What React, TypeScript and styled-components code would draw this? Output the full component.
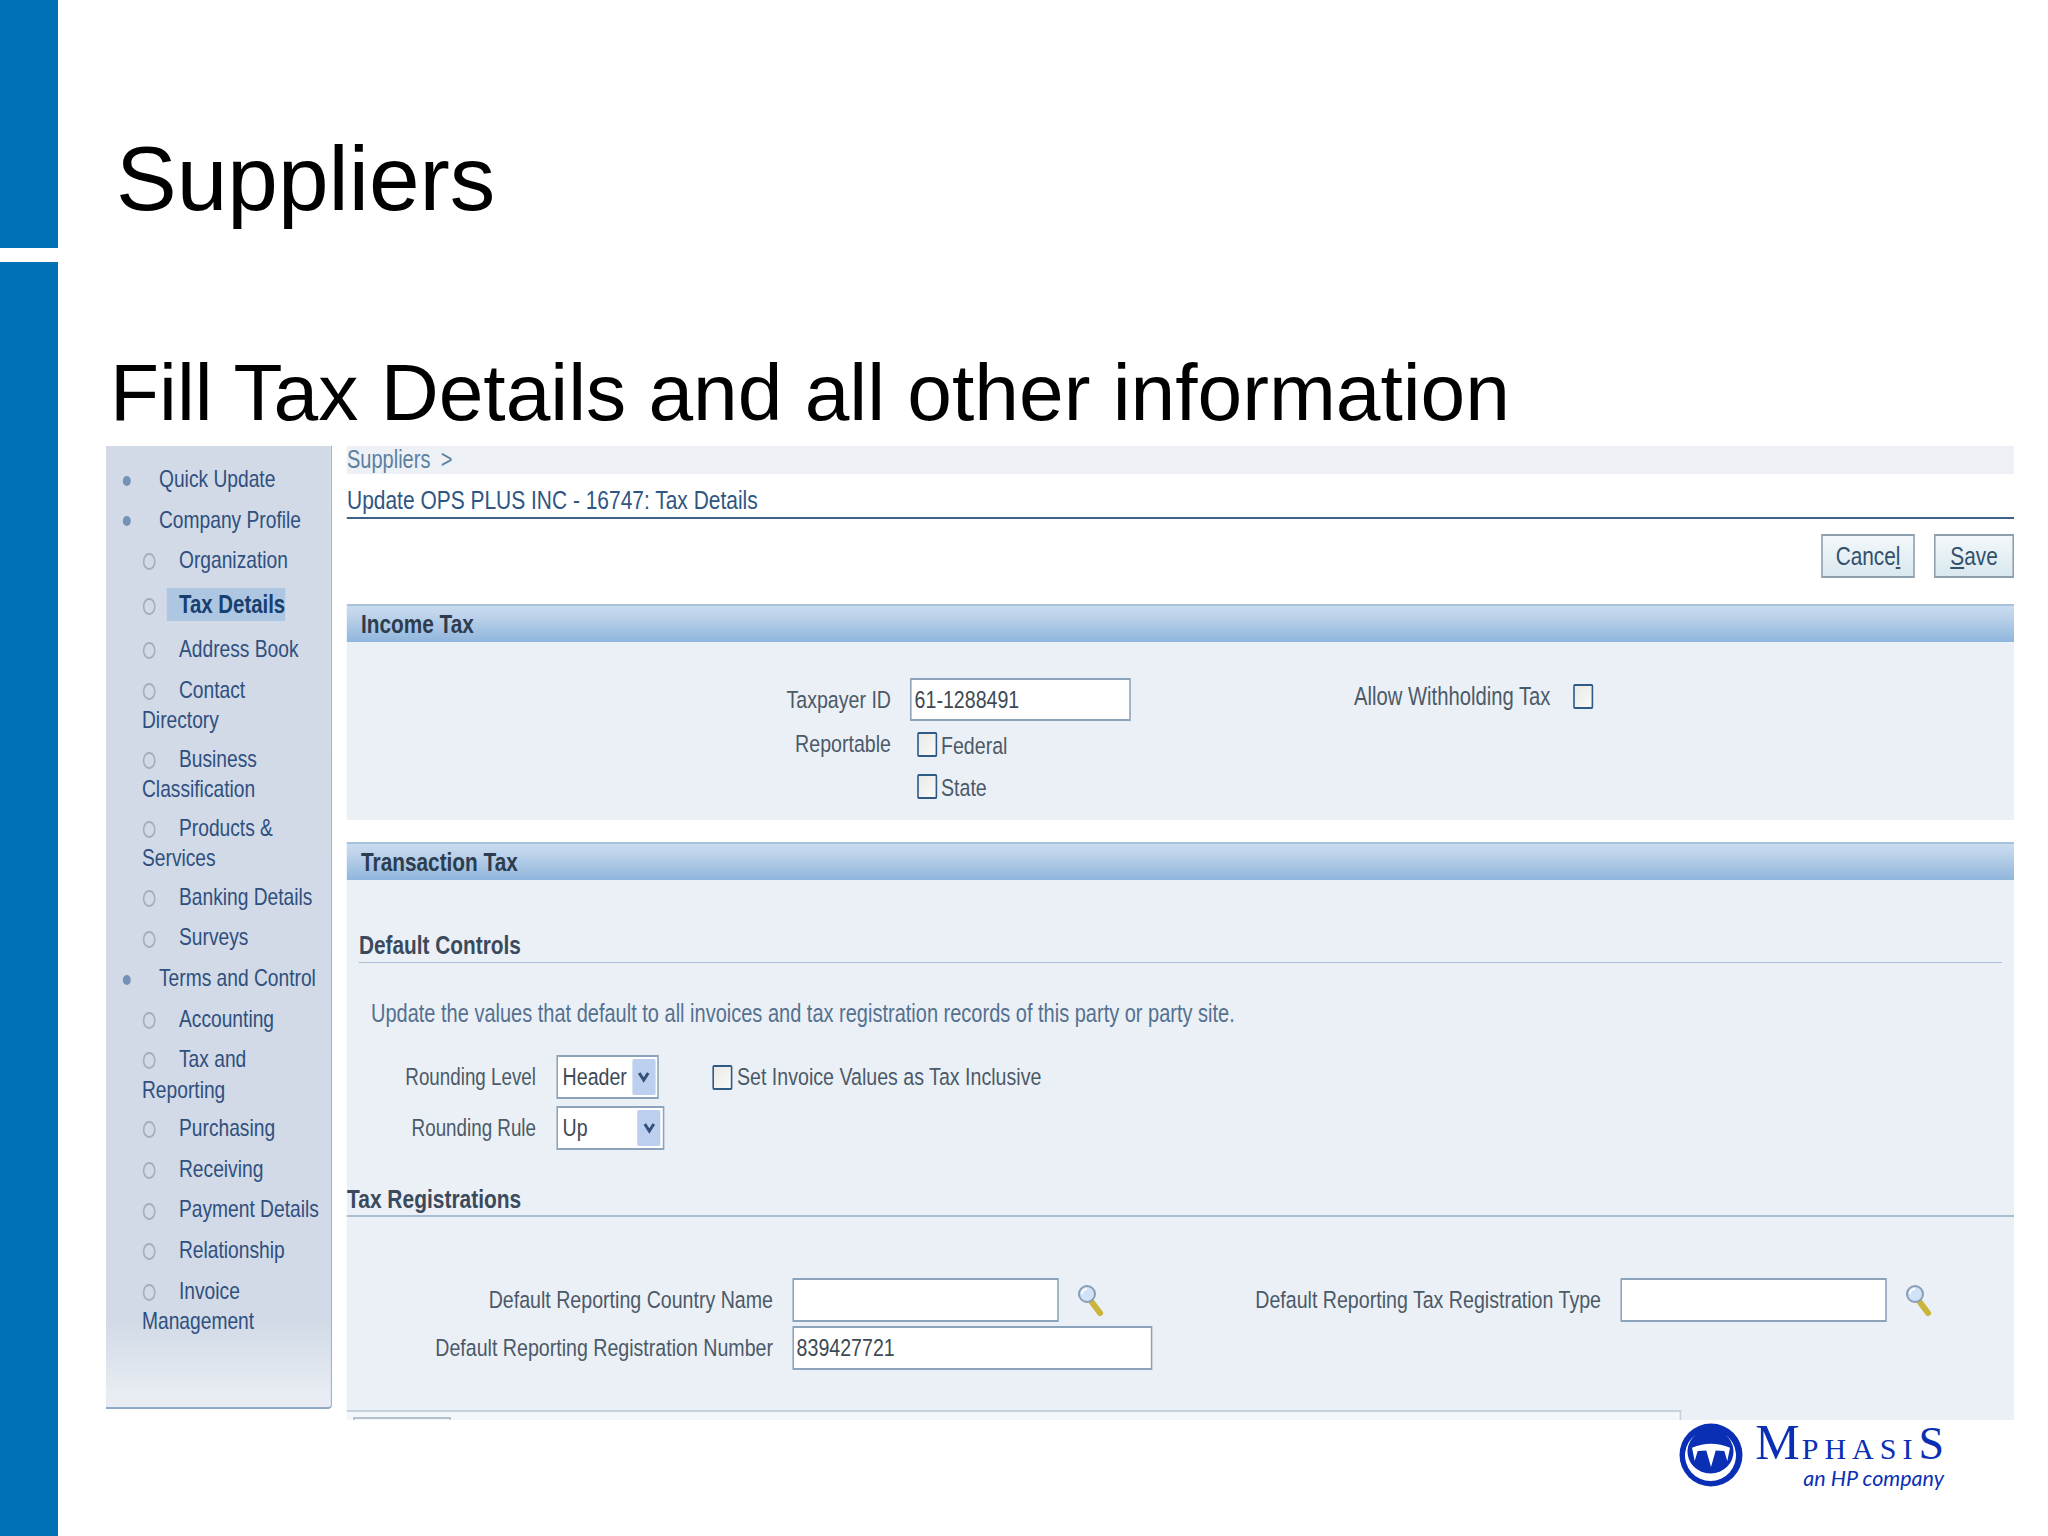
import React from "react";
import styled, { createGlobalStyle } from "styled-components";

// the app screenshot sits squeezed in the slide, so its panel is squeezed the same way
const SQUEEZE = 0.8;
const sx = (n: number) => `${n / SQUEEZE}px`;

const GlobalStyle = createGlobalStyle`
  * { box-sizing: border-box; }
  html, body { margin: 0; padding: 0; background: #fff; }
  body { font-family: "Liberation Sans", Arial, sans-serif; }
`;

const Slide = styled.div`
  width: 2048px;
  height: 1536px;
  display: flex;
  overflow: hidden;
  background: #fff;
`;

const Stripe = styled.div`
  width: 58px;
  display: flex;
  flex-direction: column;
  gap: 14px;
  flex-shrink: 0;
`;

const StripeTop = styled.div`
  height: 248px;
  background: #0071b5;
`;

const StripeBottom = styled.div`
  flex: 1;
  background: #0071b5;
`;

const Content = styled.div`
  width: 1956px;
  padding-left: 48px;
  display: flex;
  flex-direction: column;
`;

const Title = styled.h1`
  margin: 0;
  padding: 120px 0 0 10px;
  height: 340px;
  font-size: 91px;
  line-height: 117px;
  font-weight: 400;
  color: #000;
`;

const Subtitle = styled.h2`
  margin: 0;
  padding-left: 4px;
  height: 106px;
  font-size: 80.3px;
  line-height: 105px;
  font-weight: 400;
  color: #000;
`;

const ShotFrame = styled.div`
  height: 973px;
`;

const Shot = styled.div`
  width: ${sx(1908)};
  height: 973px;
  transform: scaleX(${SQUEEZE});
  transform-origin: 0 0;
  display: grid;
  grid-template-columns: ${sx(226)} 1fr;
  column-gap: ${sx(15)};
  font-size: 24.5px;
`;

const Sidebar = styled.nav`
  height: 963px;
  padding-top: 18px;
  background: linear-gradient(180deg, #d1dae6 0, #d1dae6 91%, #e9edf3 99%);
  border-right: 2px solid #9db8d8;
  border-bottom: 2px solid #8fa9c6;
  border-bottom-right-radius: 5px;
`;

const NavList = styled.ul`
  list-style: none;
  margin: 0;
  padding: 0;
`;

const NavItem = styled.li<{ $sub?: boolean; $active?: boolean; $wrap: boolean }>`
  padding-left: ${(p) => (p.$sub ? sx(36) : sx(15))};
  padding-top: ${(p) => (p.$active ? "2px" : "0")};
  line-height: 30.5px;
  margin-bottom: ${(p) => (p.$active ? "13.5px" : p.$wrap ? "8px" : "10.1px")};
  color: #2f4f7f;
  font-size: 24px;
  white-space: pre-line;
`;

const Bullet = styled.span<{ $sub?: boolean }>`
  display: inline-block;
  width: ${(p) => (p.$sub ? sx(37) : sx(38))};
  vertical-align: middle;
  &::before {
    content: "";
    display: block;
    margin-left: ${(p) => (p.$sub ? sx(1) : sx(2))};
    width: ${(p) => (p.$sub ? sx(9) : sx(8))};
    height: ${(p) => (p.$sub ? "13px" : "10px")};
    border-radius: 50%;
    background: ${(p) => (p.$sub ? "transparent" : "#7492b5")};
    border: ${(p) => (p.$sub ? "2px solid #a3afbc" : "none")};
  }
`;

const ActiveLabel = styled.span`
  display: inline-block;
  margin-left: ${sx(-12)};
  padding: 1px 0 2px ${sx(12)};
  line-height: 30px;
  background: #adc6e2;
  color: #17406f;
  font-size: 25.5px;
  font-weight: 700;
`;

const Main = styled.main`
  display: flex;
  flex-direction: column;
  min-width: 0;
`;

const Crumbs = styled.div`
  height: 28px;
  line-height: 26px;
  background: #edf1f6;
  color: #5c809f;
  font-size: 25px;
  word-spacing: 6px;
`;

const PageTitle = styled.div`
  height: 45px;
  padding-top: 10px;
  line-height: 32px;
  border-bottom: 2px solid #3d6089;
  color: #2f5583;
  font-size: 26.2px;
`;

const ButtonBar = styled.div`
  display: flex;
  justify-content: flex-end;
  gap: ${sx(19)};
  padding-top: 15px;
  height: 85px;
`;

const Button = styled.button<{ $w: number }>`
  width: ${(p) => sx(p.$w)};
  height: 44px;
  padding: 0;
  font: inherit;
  font-size: 26px;
  color: #33506c;
  background: linear-gradient(180deg, #f3f8fa 0, #d9e8ef 100%);
  border: 2px solid #8d9fae;
`;

const SectionHead = styled.div`
  height: 38px;
  padding-left: ${sx(14)};
  line-height: 36px;
  font-size: 26px;
  font-weight: 700;
  color: #2d3c4e;
  background: linear-gradient(180deg, #c9dbef 0, #bcd2ea 30%, #8fb6dc 100%);
  border-top: 2px solid #a9c2dc;
`;

const SectionBody = styled.div<{ $h: number }>`
  height: ${(p) => p.$h}px;
  background: #ebf0f6;
  display: flow-root;
`;

const Gap = styled.div`
  height: 22px;
`;

const IncomeGrid = styled.div`
  display: flex;
  padding-top: 36px;
`;

const IncomeLeft = styled.div`
  width: ${sx(1007)};
  display: grid;
  grid-template-columns: ${sx(544)} 1fr;
  column-gap: ${sx(19)};
  row-gap: 4px;
  align-items: center;
`;

const Label = styled.div`
  text-align: right;
  color: #4b5a68;
  line-height: 32px;
  white-space: nowrap;
`;

const RoundingLabel = styled(Label)`
  font-size: 23.5px;
`;

const CheckRow = styled.label`
  display: flex;
  align-items: center;
  gap: ${sx(4)};
  height: 38px;
  padding-left: ${sx(7)};
  color: #4b5a68;
`;

const CheckText = styled.span`
  padding-top: 3px;
`;

const Check = styled.input.attrs({ type: "checkbox", readOnly: true })`
  appearance: none;
  margin: 0;
  width: ${sx(20)};
  height: 25px;
  flex-shrink: 0;
  border: 2px solid #2f5a86;
  border-radius: 2px;
  background: linear-gradient(135deg, #e8e8e4, #fafafa);
`;

const TextBox = styled.input.attrs({ readOnly: true })<{ $w: number; $h?: number }>`
  display: block;
  width: ${(p) => sx(p.$w)};
  height: ${(p) => p.$h ?? 43}px;
  padding: 0 ${sx(3)};
  font: inherit;
  color: #3d4a55;
  background: #fff;
  border: 2px solid #8ba3bb;
  outline: none;
`;

const WithholdRow = styled.div`
  display: flex;
  align-items: center;
  gap: ${sx(23)};
  height: 32px;
  color: #4b5a68;
  font-size: 25.3px;
  margin-top: 2px;
`;

const SubHead = styled.div`
  margin: 51px ${sx(12)} 0 ${sx(12)};
  height: 32px;
  line-height: 28px;
  font-size: 26px;
  font-weight: 700;
  color: #3a4a5c;
  border-bottom: 1px solid #a9bed4;
`;

const Hint = styled.p`
  margin: 34px 0 0 ${sx(24)};
  line-height: 32px;
  font-size: 25px;
  color: #55718f;
`;

const RoundingGrid = styled.div`
  margin-top: 26px;
  display: grid;
  grid-template-columns: ${sx(189)} max-content max-content;
  column-gap: ${sx(20)};
  row-gap: 7px;
  align-items: center;
`;

const Select = styled.div<{ $w: number }>`
  width: ${(p) => sx(p.$w)};
  height: 44px;
  padding: 0 ${sx(2)} 0 ${sx(5)};
  display: flex;
  align-items: center;
  justify-content: space-between;
  background: #fff;
  border: 2px solid #8ba3bb;
  color: #3d4a55;
`;

const SelectArrow = styled.span`
  width: ${sx(23)};
  height: 36px;
  display: flex;
  align-items: center;
  justify-content: center;
  border-radius: 2px;
  background: #bccfee;
`;

const InclusiveRow = styled.div`
  display: flex;
  align-items: center;
  gap: ${sx(5)};
  margin-left: ${sx(28)};
  color: #4b5a68;
`;

const RegHead = styled.div`
  margin-top: 34px;
  height: 33px;
  line-height: 30px;
  font-size: 26.2px;
  font-weight: 700;
  color: #3a4a5c;
  border-bottom: 2px solid #a9bed4;
`;

const RegGrid = styled.div`
  margin-top: 61px;
  display: grid;
  grid-template-columns: ${sx(426)} ${sx(267)} ${sx(154)} ${sx(350)} ${sx(267)} ${sx(42)};
  column-gap: ${sx(19)};
  row-gap: 4px;
  align-items: center;
`;

const WideCell = styled.div`
  grid-column: 2 / span 5;
`;

const LensCell = styled.div`
  display: flex;
  align-items: center;
`;

const TabStrip = styled.div`
  margin-top: 40px;
  width: ${sx(1334)};
  height: 10px;
  background: #f3f7fb;
  border-top: 2px solid #c5d1dd;
  border-right: 2px solid #c5d1dd;
  padding: 5px 0 0 ${sx(6)};
`;

const TabStub = styled.div`
  width: ${sx(98)};
  height: 3px;
  border: 2px solid #b3c1cf;
  border-bottom: 0;
`;

const Footer = styled.div`
  display: flex;
  justify-content: flex-end;
  align-items: flex-start;
  gap: 12px;
  padding-right: 70px;
  margin-top: 4px;
  color: #0a2fb5;
`;

const LogoText = styled.div`
  display: flex;
  flex-direction: column;
  align-items: flex-end;
`;

const Brand = styled.div`
  font-family: "Liberation Serif", serif;
  font-size: 30px;
  line-height: 38px;
  letter-spacing: 6px;
  white-space: nowrap;
`;

const BrandCap = styled.span<{ $last?: boolean }>`
  font-size: ${(p) => (p.$last ? "46px" : "50px")};
  letter-spacing: ${(p) => (p.$last ? "0" : "2px")};
`;

const Tagline = styled.div`
  font-family: "Lato", sans-serif;
  font-style: italic;
  font-size: 21.5px;
  line-height: 24px;
  margin-top: -2px;
`;

const Lens = () => (
  <svg width={26 / SQUEEZE} height="33" viewBox="0 0 26 33" preserveAspectRatio="none">
    <path d="M13 17 L22 29" stroke="#c9b53a" strokeWidth="6" strokeLinecap="round" />
    <circle cx="9" cy="10" r="8" fill="#cfe2f7" stroke="#8a9db5" strokeWidth="2" />
    <path d="M4 10 a5 5 0 0 1 5 -5" stroke="#fff" strokeWidth="2" fill="none" />
  </svg>
);

const Chevron = () => (
  <svg width={13 / SQUEEZE} height="12" viewBox="0 0 13 12" preserveAspectRatio="none">
    <path d="M2 2 L6.5 9 L11 2" stroke="#34507a" strokeWidth="3" fill="none" />
  </svg>
);

const LogoMark = () => (
  <svg width="64" height="64" viewBox="0 0 64 64">
    <circle cx="32" cy="32" r="31.5" fill="#0a2fb5" />
    <path d="M46 11.5 A25.5 25.5 0 1 1 17 11.5 A23 22 0 1 0 46 11.5 Z" fill="#fff" />
    <path d="M13 24.8 Q32 16.5 51 24.8 L48.3 38 L45.3 28 L36.7 27.5 L32 44 L27.3 27.5 L18.7 28 L15.7 38 Z" fill="#fff" />
  </svg>
);

type NavEntry = { label: string; sub?: boolean; active?: boolean };

const navEntries: NavEntry[] = [
  { label: "Quick Update" },
  { label: "Company Profile" },
  { label: "Organization", sub: true },
  { label: "Tax Details", sub: true, active: true },
  { label: "Address Book", sub: true },
  { label: "Contact\nDirectory", sub: true },
  { label: "Business\nClassification", sub: true },
  { label: "Products &\nServices", sub: true },
  { label: "Banking Details", sub: true },
  { label: "Surveys", sub: true },
  { label: "Terms and Control" },
  { label: "Accounting", sub: true },
  { label: "Tax and\nReporting", sub: true },
  { label: "Purchasing", sub: true },
  { label: "Receiving", sub: true },
  { label: "Payment Details", sub: true },
  { label: "Relationship", sub: true },
  { label: "Invoice\nManagement", sub: true },
];

export default function App() {
  return (
    <Slide>
      <GlobalStyle />
      <Stripe>
        <StripeTop />
        <StripeBottom />
      </Stripe>
      <Content>
        <Title>Suppliers</Title>
        <Subtitle>Fill Tax Details and all other information</Subtitle>
        <ShotFrame>
          <Shot>
            <Sidebar>
              <NavList>
                {navEntries.map((item) => (
                  <NavItem
                    key={item.label}
                    $sub={item.sub}
                    $active={item.active}
                    $wrap={item.label.includes("\n")}
                  >
                    <Bullet $sub={item.sub} />
                    {item.active ? <ActiveLabel>{item.label}</ActiveLabel> : item.label}
                  </NavItem>
                ))}
              </NavList>
            </Sidebar>
            <Main>
              <Crumbs>Suppliers &gt;</Crumbs>
              <PageTitle>Update OPS PLUS INC - 16747: Tax Details</PageTitle>
              <ButtonBar>
                <Button $w={94}>Cance<u>l</u></Button>
                <Button $w={80}><u>S</u>ave</Button>
              </ButtonBar>

              <SectionHead>Income Tax</SectionHead>
              <SectionBody $h={178}>
                <IncomeGrid>
                  <IncomeLeft>
                    <Label>Taxpayer ID</Label>
                    <TextBox $w={221} value="61-1288491" />
                    <Label>Reportable</Label>
                    <CheckRow><Check /><CheckText>Federal</CheckText></CheckRow>
                    <span />
                    <CheckRow><Check /><CheckText>State</CheckText></CheckRow>
                  </IncomeLeft>
                  <WithholdRow>Allow Withholding Tax <Check /></WithholdRow>
                </IncomeGrid>
              </SectionBody>
              <Gap />

              <SectionHead>Transaction Tax</SectionHead>
              <SectionBody $h={540}>
                <SubHead>Default Controls</SubHead>
                <Hint>Update the values that default to all invoices and tax registration records of this party or party site.</Hint>
                <RoundingGrid>
                  <RoundingLabel>Rounding Level</RoundingLabel>
                  <Select $w={103}>Header<SelectArrow><Chevron /></SelectArrow></Select>
                  <InclusiveRow><Check />Set Invoice Values as Tax Inclusive</InclusiveRow>
                  <RoundingLabel>Rounding Rule</RoundingLabel>
                  <Select $w={108}>Up<SelectArrow><Chevron /></SelectArrow></Select>
                </RoundingGrid>
                <RegHead>Tax Registrations</RegHead>
                <RegGrid>
                  <Label>Default Reporting Country Name</Label>
                  <TextBox $w={267} $h={44} value="" />
                  <LensCell><Lens /></LensCell>
                  <Label>Default Reporting Tax Registration Type</Label>
                  <TextBox $w={267} $h={44} value="" />
                  <LensCell><Lens /></LensCell>
                  <Label>Default Reporting Registration Number</Label>
                  <WideCell><TextBox $w={360} $h={44} value="839427721" /></WideCell>
                </RegGrid>
                <TabStrip><TabStub /></TabStrip>
              </SectionBody>
            </Main>
          </Shot>
        </ShotFrame>
        <Footer>
          <LogoMark />
          <LogoText>
            <Brand><BrandCap>M</BrandCap>PHASI<BrandCap $last>S</BrandCap></Brand>
            <Tagline>an HP company</Tagline>
          </LogoText>
        </Footer>
      </Content>
    </Slide>
  );
}
